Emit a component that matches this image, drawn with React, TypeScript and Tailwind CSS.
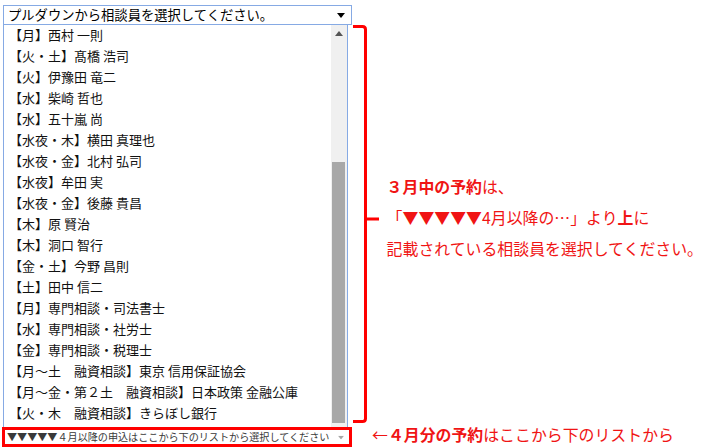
const counselors = [
  "【月】西村 一則",
  "【火・土】髙橋 浩司",
  "【火】伊豫田 竜二",
  "【水】柴崎 哲也",
  "【水】五十嵐 尚",
  "【水夜・木】横田 真理也",
  "【水夜・金】北村 弘司",
  "【水夜】牟田 実",
  "【水夜・金】後藤 貴昌",
  "【木】原 賢治",
  "【木】洞口 智行",
  "【金・土】今野 昌則",
  "【土】田中 信二",
  "【月】専門相談・司法書士",
  "【水】専門相談・社労士",
  "【金】専門相談・税理士",
  "【月〜土　融資相談】東京 信用保証協会",
  "【月〜金・第２土　融資相談】日本政策 金融公庫",
  "【火・木　融資相談】きらぼし銀行",
];

function Caret({ className, up }: { className: string; up?: boolean }) {
  return (
    <svg width="8" height="5" viewBox="0 0 8 5" className={className}>
      <polygon points={up ? "0,5 8,5 4,0" : "0,0 8,0 4,5"} fill="currentColor" />
    </svg>
  );
}

export default function App() {
  return (
    <div className="w-[703px] h-[448px] bg-white overflow-hidden text-black font-['Noto_Sans_CJK_JP','Noto_Sans',sans-serif]">
      <div className="pt-[5px] pl-[3px]">
        {/* main pulldown */}
        <div className="w-[349px] h-[20px] border border-[#86aae4] flex items-center pl-[4px] pr-[6px] text-[13.3px] leading-none">
          <span className="flex-1 whitespace-nowrap -mt-[1px]">プルダウンから相談員を選択してください。</span>
          <Caret className="text-black" />
        </div>

        <div className="flex">
          {/* open list */}
          <div className="w-[349px] h-[402px] border-x border-[#86aae4] flex overflow-hidden">
            <ul className="flex-1 pl-[5px] -mt-[1.5px] text-[13px] leading-[21px] text-[#111]">
              {counselors.map((c) => (
                <li key={c} className="h-[21px] whitespace-nowrap">
                  {c}
                </li>
              ))}
            </ul>
            <div className="w-[16px] bg-[#f0f0f0] flex flex-col items-center">
              <Caret up className="mt-[6px] text-[#555]" />
              <div className="w-[13px] h-[261px] mt-[126px] bg-[#a8a8a8]" />
            </div>
          </div>

          {/* bracket */}
          <svg width="38" height="402" viewBox="0 0 38 402" className="shrink-0">
            <path
              d="M5 1.5 H14.5 Q17.5 1.5 17.5 4.5 V393.5 Q17.5 396.5 14.5 396.5 H5 M17.5 194 H31"
              fill="none"
              stroke="#ff0000"
              strokeWidth="3"
            />
          </svg>

          <div className="pt-[146px] pl-[1px] text-[15.9px] leading-[31px] text-[#f01414] whitespace-nowrap">
            <p>
              <b>３月中の予約</b>は、
            </p>
            <p>
              「▼▼▼▼▼4月以降の…」より<b>上</b>に
            </p>
            <p>記載されている相談員を選択してください。</p>
          </div>
        </div>

        <div className="flex items-center">
          <div className="-ml-[1px] w-[350px] h-[20px] border-[3px] border-[#ff0000] flex items-center pl-[2px] pr-[4px] text-[10.1px] leading-[14px] text-[#3a3a3a]">
            <span className="flex-1 whitespace-nowrap">▼▼▼▼▼４月以降の申込はここから下のリストから選択してください</span>
            <Caret className="shrink-0 ml-[2px] text-[#a6a6a6] scale-75" />
          </div>
          <p className="ml-[20px] -mt-[4px] text-[15.9px] leading-none text-[#f01414] whitespace-nowrap">
            ←<b>４月分の予約</b>はここから下のリストから
          </p>
        </div>
      </div>
    </div>
  );
}
